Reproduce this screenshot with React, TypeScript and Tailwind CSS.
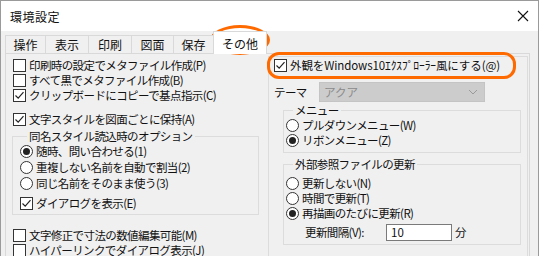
import React from 'react';

const font = { fontFamily: '"Meiryo UI", "Noto Sans CJK JP", "Noto Sans", sans-serif' };

function Check({ checked = false }: { checked?: boolean }) {
  return (
    <span className="w-[13px] h-[13px] shrink-0 border border-[#333] bg-white flex items-center justify-center">
      {checked && (
        <svg width="11" height="11" viewBox="0 0 11 11">
          <polyline points="1.5,5.5 4.2,8.2 9.5,2.2" fill="none" stroke="#222" strokeWidth="1.2" />
        </svg>
      )}
    </span>
  );
}

function Radio({ checked = false }: { checked?: boolean }) {
  return (
    <span className="w-[13px] h-[13px] shrink-0 rounded-full border border-[#333] bg-white flex items-center justify-center">
      {checked && <span className="w-[7px] h-[7px] rounded-full bg-[#222]" />}
    </span>
  );
}

function Row({ kind, checked, label, h = 'h-[15px]', track = 'tracking-[-0.6px]' }: { kind: 'check' | 'radio'; checked?: boolean; label: string; h?: string; track?: string }) {
  return (
    <div className={`flex items-center gap-[3px] ${h}`}>
      {kind === 'check' ? <Check checked={checked} /> : <Radio checked={checked} />}
      <span className={`whitespace-nowrap ${track}`}>{label}</span>
    </div>
  );
}

const tabs = ['操作', '表示', '印刷', '図面', '保存'];
const tabW = ['w-[40px]', 'w-[43px]', 'w-[43px]', 'w-[42px]', 'w-[40px]'];

export default function App() {
  return (
    <div style={font} className="relative w-[539px] h-[256px] overflow-hidden bg-[#f0f0f0] border-l border-r border-t border-[#9a9a9a] text-[11.5px] leading-[15px] text-[#111]">
      {/* title bar */}
      <div className="h-[30px] bg-white flex items-center justify-between pl-[9px] pr-[9px] text-[12px]">
        <span className="tracking-[0.5px]">環境設定</span>
        <svg width="12" height="12" viewBox="0 0 12 12">
          <path d="M1 1 L11 11 M11 1 L1 11" stroke="#111" strokeWidth="1.1" />
        </svg>
      </div>

      <div className="pl-[4px] pr-[8px]">
        {/* tabs */}
        <div className="flex items-end h-[22px] relative z-10 text-[12px]">
          {tabs.map((t, i) => (
            <div key={t} className={`${tabW[i]} h-[18px] border-t border-l border-[#d9d9d9] bg-[#f0f0f0] flex items-center justify-center`}>
              {t}
            </div>
          ))}
          <div className="w-[54px] h-[23px] -mb-px border border-b-0 border-[#d9d9d9] bg-white flex items-center justify-center">
            その他
          </div>
        </div>

        {/* page */}
        <div className="h-[220px] border border-[#d9d9d9] flex pl-[7px] pr-[1px] gap-[9px]">
          {/* left column */}
          <div className="w-[246px] shrink-0 flex flex-col pt-[4px]">
            <Row kind="check" label="印刷時の設定でメタファイル作成(P)" />
            <Row kind="check" label="すべて黒でメタファイル作成(B)" />
            <Row kind="check" checked label="クリップボードにコピーで基点指示(C)" />
            <div className="mt-[9px]">
              <Row kind="check" checked label="文字スタイルを図面ごとに保持(A)" />
            </div>
            <fieldset className="mt-[3px] -ml-px border border-[#dcdcdc] pl-[7px] pb-[3px]">
              <legend className="ml-[7px] px-[2px] leading-[13px] tracking-[-0.6px]">同名スタイル読込時のオプション</legend>
              <Row kind="radio" checked h="h-[16px]" label="随時、問い合わせる(1)" />
              <Row kind="radio" h="h-[16px]" label="重複しない名前を自動で割当(2)" />
              <Row kind="radio" h="h-[16px]" label="同じ名前をそのまま使う(3)" />
              <div className="mt-[4px]">
                <Row kind="check" checked h="h-[16px]" label="ダイアログを表示(E)" />
              </div>
            </fieldset>
            <div className="mt-[12px]">
              <Row kind="check" h="h-[16px]" label="文字修正で寸法の数値編集可能(M)" />
            </div>
            <Row kind="check" h="h-[15px]" label="ハイパーリンクでダイアログ表示(J)" />
          </div>

          {/* right column */}
          <div className="flex-1 min-w-0 mt-[2px] border border-[#dcdcdc] flex flex-col pl-[5px] pr-[5px]">
            <div>
              <Row kind="check" checked h="h-[16px]" track="tracking-[-0.1px]" label="外観をWindows10ｴｸｽﾌﾟﾛｰﾗｰ風にする(@)" />
            </div>
            <div className="mt-[9px] flex items-center h-[20px]">
              <span className="w-[45px] tracking-[-0.6px]">テーマ</span>
              <div className="w-[166px] h-[20px] bg-[#cccccc] border border-[#c4c4c4] flex items-center justify-between pl-[4px] pr-[6px] text-[#8a8a8a]">
                <span>アクア</span>
                <svg width="10" height="6" viewBox="0 0 10 6">
                  <polyline points="1,1 5,5 9,1" fill="none" stroke="#9a9a9a" strokeWidth="1" />
                </svg>
              </div>
            </div>
            <fieldset className="mt-[1px] ml-[9px] mr-[1px] border border-[#dcdcdc] pl-[2px] pb-[4px]">
              <legend className="ml-[7px] px-[2px] tracking-[-0.6px]">メニュー</legend>
              <Row kind="radio" h="h-[15px]" label="プルダウンメニュー(W)" />
              <Row kind="radio" checked h="h-[15px]" label="リボンメニュー(Z)" />
            </fieldset>
            <fieldset className="mt-[4px] ml-[9px] mr-[1px] border border-[#dcdcdc] pl-[2px] pb-[3px]">
              <legend className="ml-[7px] px-[2px] tracking-[-0.6px]">外部参照ファイルの更新</legend>
              <div className="mt-[3px]">
                <Row kind="radio" h="h-[16px]" label="更新しない(N)" />
              </div>
              <Row kind="radio" h="h-[15px]" label="時間で更新(T)" />
              <Row kind="radio" checked h="h-[15px]" label="再描画のたびに更新(R)" />
              <div className="mt-[3px] flex items-center h-[17px] pl-[19px]">
                <span className="w-[81px] tracking-[-0.6px]">更新間隔(V):</span>
                <div className="w-[66px] h-[17px] bg-white border border-[#7a7a7a] flex items-center pl-[4px]">10</div>
                <span className="ml-[3px]">分</span>
              </div>
            </fieldset>
          </div>
        </div>
      </div>

      {/* orange annotations */}
      <div className="absolute left-[209px] top-[24px] w-[60px] h-[30px] rounded-[50%] border-[3px] border-[#ff6a00]" />
      <div className="absolute left-[266px] top-[51px] w-[249px] h-[27px] rounded-[12px] border-[3px] border-[#ff6a00]" />
    </div>
  );
}
